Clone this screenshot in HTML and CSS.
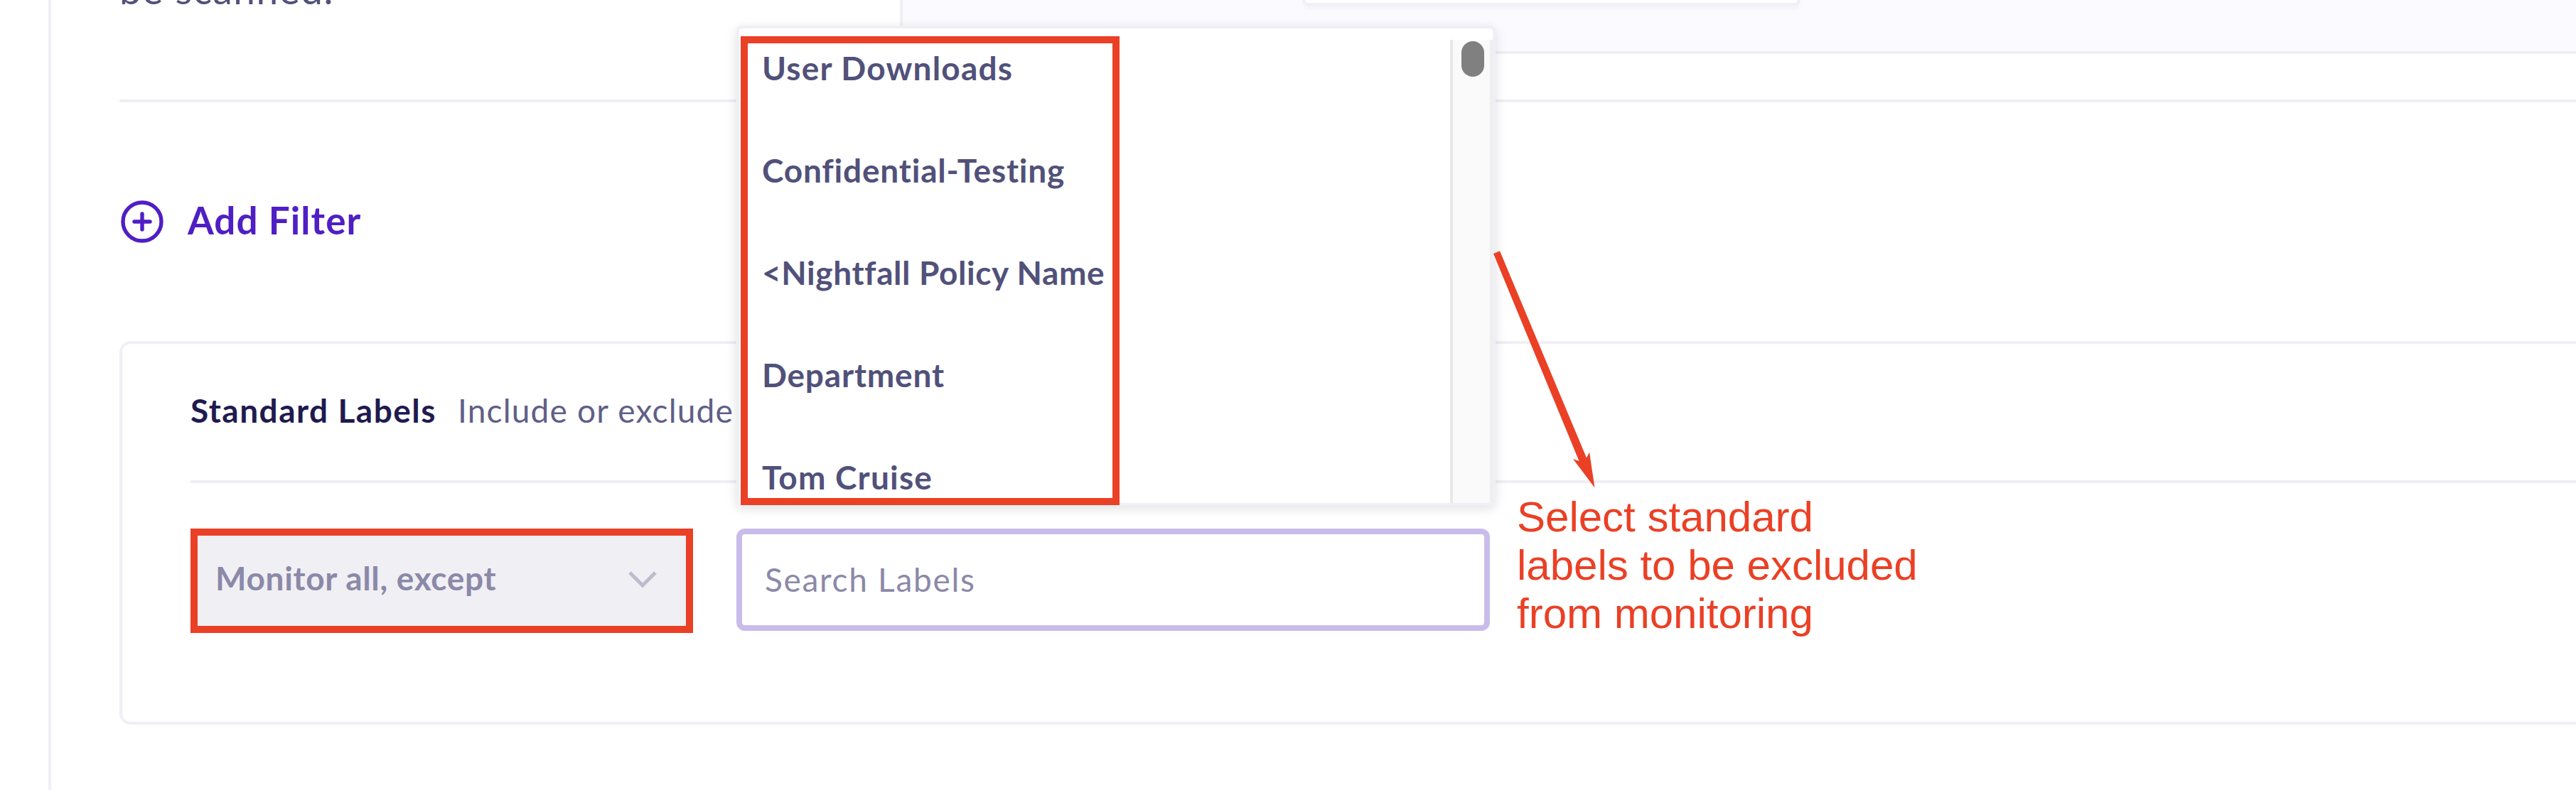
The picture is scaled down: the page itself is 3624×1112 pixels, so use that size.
FILE: index.html
```html
<!DOCTYPE html>
<html lang="en">
<head>
<meta charset="utf-8">
<title>Policy scope</title>
<link rel="stylesheet" href="styles.css">
</head>
<body>
<main class="panel">
  <section class="scope">
    <p class="scope-note">be scanned.</p>
    <div class="scope-options"><div class="option-card"></div></div>
  </section>
  <div class="add-filter">
    <svg class="plus" viewBox="0 0 60 60"><circle cx="30" cy="30" r="27"/><path d="M30 19v22M19 30h22"/></svg>
    <span class="add-text">Add Filter</span>
  </div>
  <section class="card">
    <header class="card-head">
      <strong class="card-title">Standard Labels</strong>
      <span class="card-sub">Include or exclude</span>
    </header>
    <div class="controls">
      <div class="select">
        <span class="select-text">Monitor all, except</span>
        <svg class="chevron" viewBox="0 0 40 24"><path d="M2 2l18 18L38 2"/></svg>
        <div class="mark mark-select"></div>
      </div>
      <div class="search">
        <span class="search-text">Search Labels</span>
        <div class="menu">
          <ul class="list">
            <li class="wide">User Downloads</li>
            <li>Confidential-Testing</li>
            <li class="tight">&lt;Nightfall Policy Name</li>
            <li>Department</li>
            <li class="wide">Tom Cruise</li>
          </ul>
          <div class="track"><div class="thumb"></div></div>
          <div class="mark mark-list"></div>
        </div>
      </div>
    </div>
  </section>
</main>
<svg class="arrow" viewBox="0 0 144 336"><path d="M1 7L10 3.3 132 294.500 136 286.500 143.500 336.500 113 296 121.500 299z"/></svg>
<p class="note">Select standard<br>labels to be excluded<br>from monitoring</p>
</body>
</html>
```
FILE: styles.css
```css
* { box-sizing: border-box; }
body {
  margin: 0;
  position: relative;
  width: 3624px;
  height: 1112px;
  overflow: hidden;
  background: #fff;
  font-family: Lato, "Open Sans", sans-serif;
  font-size: 46px;
  font-variant-ligatures: none;
  color: #51517a;
}
p, ul { margin: 0; padding: 0; list-style: none; }
span, strong, li { white-space: nowrap; }
.panel {
  width: 3700px;
  height: 1128px;
  margin-left: 68px;
  padding-left: 96px;
  border: solid #f0eff5;
  border-width: 0 0 4px 4px;
  border-radius: 0 0 0 20px;
}
.scope {
  display: flex;
  height: 144px;
  border-bottom: 4px solid #f0eff5;
}
.scope-note {
  width: 1098px;
  font-size: 55px;
  letter-spacing: 1.5px;
  line-height: 60px;
  margin-top: -45px;
}
.scope-options {
  flex: 1;
  height: 76px;
  padding-left: 562px;
  background: #fbfaff;
  border: solid #f0eff5;
  border-width: 0 0 4px 4px;
}
.option-card {
  width: 701px;
  height: 8px;
  background: #fff;
  border: 4px solid #f0eff5;
  border-top: 0;
  border-radius: 0 0 8px 8px;
  box-shadow: 0 4px 6px rgba(30, 25, 80, .04);
}
.add-filter {
  display: flex;
  align-items: center;
  height: 336px;
  padding-left: 2px;
  color: #4f1fc4;
  font-size: 53px;
  font-weight: 700;
  letter-spacing: 1.1px;
}
.plus { width: 60px; height: 60px; margin-right: 34px; }
.plus * { fill: none; stroke: #4f1fc4; stroke-width: 5.4; stroke-linecap: round; }
.add-text { padding-bottom: 5px; }
.card {
  height: 540px;
  padding-left: 96px;
  border: 4px solid #f0eff5;
  border-radius: 16px;
}
.card-head {
  display: flex;
  align-items: center;
  height: 196px;
  padding-bottom: 6px;
  border-bottom: 4px solid #f0eff5;
}
.card-title { color: #1f1b4f; margin-right: 30px; letter-spacing: 1.5px; }
.card-sub { color: #5f5f88; letter-spacing: 1.2px; }
.controls { display: flex; gap: 64px; padding-top: 64px; }
.select {
  position: relative;
  display: flex;
  align-items: center;
  justify-content: space-between;
  width: 704px;
  height: 144px;
  padding: 0 48px 0 35px;
  background: #f0eff4;
  color: #8b89a8;
  font-weight: 700;
  letter-spacing: .7px;
}
.select-text { padding-bottom: 5px; }
.chevron { width: 40px; height: 24px; }
.chevron path { fill: none; stroke: #bdbccd; stroke-width: 5; }
.mark { position: absolute; border: 10px solid #ea4025; }
.mark-select { left: 0; top: -0.5px; width: 707px; height: 147px; }
.search {
  position: relative;
  display: flex;
  align-items: center;
  width: 1060px;
  height: 144px;
  padding: 0 0 2px 32px;
  border: 8px solid #c9bcea;
  border-radius: 12px;
  color: #8b89a8;
  letter-spacing: 1.7px;
}
.menu {
  position: absolute;
  left: -8px;
  top: -716px;
  display: flex;
  width: 1068px;
  height: 676px;
  padding-top: 16px;
  background: #fff;
  border: 4px solid #f0eff5;
  border-radius: 8px;
  box-shadow: 0 4px 16px rgba(0, 0, 0, .12);
}
.list {
  flex: 1;
  height: 652px;
  padding-left: 32px;
  overflow: hidden;
  color: #51517a;
  font-weight: 700;
  letter-spacing: .8px;
}
.list li { height: 144px; line-height: 79px; }
.list .wide { letter-spacing: 1.2px; }
.list .tight { letter-spacing: .6px; }
.track {
  width: 60px;
  padding: 2px 8px 0 12px;
  background: #fafafa;
  border: solid #e8e8e8;
  border-width: 0 4px;
  border-right-color: #eeeeef;
}
.thumb { width: 32px; height: 50px; border-radius: 16px; background: #808080; }
.mark-list { left: 2px; top: 10.5px; width: 533px; height: 660px; }
.arrow { position: absolute; left: 2100px; top: 350px; width: 144px; height: 336px; overflow: visible; fill: #ea4025; }
.note {
  position: absolute;
  left: 2134px;
  top: 694px;
  color: #ea4025;
  font: 60px/68px "Liberation Sans", Arial, sans-serif;
  white-space: nowrap;
}
```
